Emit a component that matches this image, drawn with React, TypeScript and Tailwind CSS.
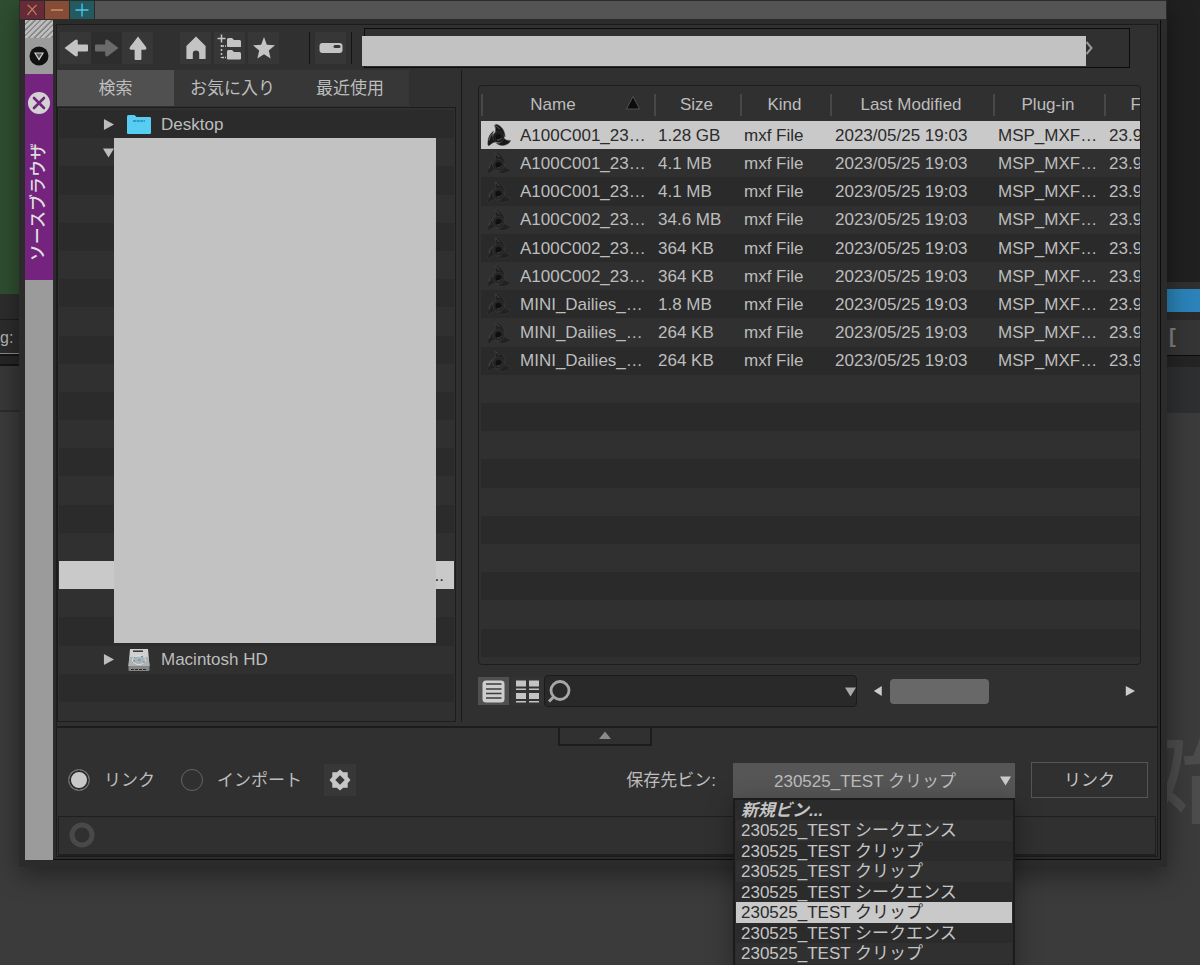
import React from "react";

type Clip = { name: string; size: string };

const clips: Clip[] = [
  { name: "A100C001_23…", size: "1.28 GB" },
  { name: "A100C001_23…", size: "4.1 MB" },
  { name: "A100C001_23…", size: "4.1 MB" },
  { name: "A100C002_23…", size: "34.6 MB" },
  { name: "A100C002_23…", size: "364 KB" },
  { name: "A100C002_23…", size: "364 KB" },
  { name: "MINI_Dailies_…", size: "1.8 MB" },
  { name: "MINI_Dailies_…", size: "264 KB" },
  { name: "MINI_Dailies_…", size: "264 KB" },
];

const bins = [
  "新規ビン...",
  "230525_TEST シークエンス",
  "230525_TEST クリップ",
  "230525_TEST クリップ",
  "230525_TEST シークエンス",
  "230525_TEST クリップ",
  "230525_TEST シークエンス",
  "230525_TEST クリップ",
];

const SELECTED_BIN = 5;
const TREE_ROWS = 21;
const SELECTED_TREE_ROW = 16;
const EMPTY_ROWS = 10;

function ToolButton({
  label,
  disabled,
  children,
}: {
  label: string;
  disabled?: boolean;
  children: React.ReactNode;
}) {
  return (
    <button
      type="button"
      aria-label={label}
      disabled={disabled}
      className="flex h-8 w-[31px] items-center justify-center bg-[#373737] disabled:bg-[#2d2d2d]"
    >
      {children}
    </button>
  );
}

function ArrowIcon({ className }: { className: string }) {
  return (
    <svg width="26" height="26" viewBox="0 0 26 26" className={className}>
      <path
        d="M1.500 13 12 5Q14.800 3.600 14.800 6.500V9.600H24Q25 9.600 25 10.600V15.400Q25 16.400 24 16.400H14.800V19.500Q14.800 22.400 12 21Z"
        fill="currentColor"
      />
    </svg>
  );
}

function HomeIcon() {
  return (
    <svg width="24" height="26" viewBox="0 0 24 26" fill="#c4c4c4">
      <path d="M12 1.500 21.600 11.100V23.400Q21.600 24 21 24H15.200V18.600A3.200 3.200 0 0 0 8.800 18.600V24H3Q2.400 24 2.400 23.400V11.100Z" />
    </svg>
  );
}

function FoldersIcon() {
  return (
    <svg width="26" height="28" viewBox="0 0 26 28">
      <g fill="#c4c4c4">
        <path d="M10 5.500Q10 4 11.500 4H15L17 6H22.500Q24 6 24 7.500V12.500Q24 13 23 13H11Q10 13 10 12Z" />
        <path d="M10 17.500Q10 16 11.500 16H15L17 18H22.500Q24 18 24 19.500V24.500Q24 25.500 23 25.500H11Q10 25.500 10 24.500Z" />
      </g>
      <g stroke="#c4c4c4" strokeWidth="1.500" fill="none">
        <path d="M4.500 0.500V8.500M0.500 4.500H8.500" />
        <path d="M4.500 11V24" strokeDasharray="2 2" />
        <path d="M5 12H9M5 23.500H9" strokeDasharray="2 1" />
      </g>
    </svg>
  );
}

function StarIcon() {
  return (
    <svg width="26" height="26" viewBox="0 0 26 26" fill="#c4c4c4">
      <path d="M13 2 15.800 9.700 24 10.300 17.800 15.600 19.600 23.500 13 19.300 6.400 23.500 8.200 15.600 2 10.300 10.200 9.700Z" />
    </svg>
  );
}

function DriveIcon() {
  return (
    <svg width="24" height="12" viewBox="0 0 24 12">
      <rect x="0.500" y="1" width="23" height="10" rx="3" fill="#c4c4c4" />
      <rect x="14.500" y="3" width="7" height="3" rx="1.500" fill="#373737" />
    </svg>
  );
}

function Triangle({
  dir,
  className = "",
  size = 11,
}: {
  dir: "up" | "down" | "left" | "right";
  className?: string;
  size?: number;
}) {
  const shapes = {
    up: "M6 1.500 12 9H0Z",
    down: "M0 1.500H12L6 11.500Z",
    left: "M1 6 10.500 0V12Z",
    right: "M1 0 12 6 1 12Z",
  };
  return (
    <svg width={size} height={size} viewBox="0 0 12 12" className={className} aria-hidden="true">
      <path d={shapes[dir]} fill="currentColor" />
    </svg>
  );
}

function ClipIcon({ active }: { active: boolean }) {
  return (
    <svg width="24" height="24" viewBox="0 0 24 24" aria-hidden="true">
      <g fill={active ? "#191919" : "#222222"} stroke={active ? "#3a3a3a" : "#3e3e3e"} strokeWidth="0.500">
        <path d="M7.500 2.500Q8.500 1 10 1.500C15 3.500 18 8 18 14C15.500 10 12.500 8.500 8.200 9.700Q9.500 5.500 7.500 2.500Z" />
        <path d="M23.500 17.500Q23 19.500 20.500 21C17 23 13.500 23 9.500 20.500C13.500 20.500 15.500 19 16.500 15Q19.500 18.300 23.500 17.500Z" />
        <path d="M4 21Q2.500 23 1 22.300C0.500 16.500 2 11.500 6.500 8.300C4.800 12.500 5.500 16 9 19Q6 19 4 21Z" />
        <circle cx="11.500" cy="14" r="5.600" />
        <circle cx="11.500" cy="14" r="3.700" fill="#0f0f0f" />
      </g>
      <path
        d="M7.800 2.500Q11 3.500 12.500 6M2 17.500Q3 12.500 5.500 10.500M10 17Q12.500 17.500 14.500 15"
        stroke={active ? "#777777" : "#505050"}
        strokeWidth="0.800"
        fill="none"
      />
    </svg>
  );
}

function FolderIcon() {
  return (
    <svg width="24" height="20" viewBox="0 0 24 20" aria-hidden="true">
      <path d="M0 2.500Q0 1 1.500 1H7.500L9.500 3H23Q24 3 24 4V19Q24 20 23 20H1Q0 20 0 19Z" fill="#57cdf3" />
      <path d="M6 7H18" stroke="#2688b2" strokeWidth="1.500" strokeDasharray="3 0.600" />
    </svg>
  );
}

function DiskIcon() {
  return (
    <svg width="24" height="24" viewBox="0 0 24 24" aria-hidden="true">
      <path d="M3 1H21L22.500 18H1.500Z" fill="#d0d0d0" />
      <path d="M2.300 9H21.700L22.500 18H1.500Z" fill="#aeb2b4" />
      <path d="M1.500 18H22.500V22Q22.500 23 21.500 23H2.500Q1.500 23 1.500 22Z" fill="#858585" />
      <path d="M6 3.200H16" stroke="#333333" strokeWidth="1.500" />
      <ellipse cx="12" cy="12" rx="6.500" ry="4.500" fill="none" stroke="#dddddd" strokeWidth="1" />
      <path d="M7 9.500H8M14 8.500H16M6 13H8M11 12H14M16 14H18" stroke="#3b9cc4" strokeWidth="1.200" />
      <path d="M4 21.500H20" stroke="#2a2a2a" strokeWidth="1" strokeDasharray="3 1" />
    </svg>
  );
}

function TitleBar() {
  return (
    <div className="flex h-5 gap-px pt-px pl-px">
      <button type="button" aria-label="閉じる" className="flex h-[18px] w-6 items-center justify-center bg-[#662b36]">
        <svg width="12" height="12" viewBox="0 0 12 12" stroke="#b87f58" strokeWidth="1.300" fill="none">
          <path d="M1.500 1Q6 4 10.500 11M10.500 1Q6 5 1.500 11" />
        </svg>
      </button>
      <button type="button" aria-label="最小化" className="flex h-[18px] w-6 items-center justify-center bg-[#864c35]">
        <svg width="12" height="12" viewBox="0 0 12 12" stroke="#d79b75" strokeWidth="1.300">
          <path d="M0 6H12" />
        </svg>
      </button>
      <button type="button" aria-label="最大化" className="flex h-[18px] w-6 items-center justify-center bg-[#225a60]">
        <svg width="14" height="14" viewBox="0 0 14 14" stroke="#4fc9ee" strokeWidth="1.300">
          <path d="M0.500 7H13.500M7 0.500V13.500" />
        </svg>
      </button>
      <div className="mr-px h-[18px] flex-1 bg-[#545454]" />
    </div>
  );
}

function Rail() {
  return (
    <div className="flex w-7 shrink-0 flex-col bg-[#9b9b9b]">
      <div className="h-[18px] bg-[repeating-linear-gradient(135deg,#bdbdbd_0px,#bdbdbd_2px,#858585_3px,#858585_4px)]" />
      <div className="flex h-9 items-center justify-center">
        <button type="button" aria-label="メニュー">
          <svg width="20" height="20" viewBox="0 0 20 20">
            <circle cx="10" cy="10" r="9.500" fill="#111111" />
            <path d="M6 7H14L10 13.500Z" fill="#555555" stroke="#d0d0d0" strokeWidth="1.200" />
          </svg>
        </button>
      </div>
      <div className="flex h-[206px] flex-col items-center bg-[#74237e] pt-[17px]">
        <button type="button" aria-label="タブを閉じる">
          <svg width="24" height="24" viewBox="0 0 24 24">
            <circle cx="12" cy="12" r="11" fill="#d2d2d2" />
            <path d="M7 7 17 17M17 7 7 17" stroke="#74237e" strokeWidth="2.600" strokeLinecap="round" />
          </svg>
        </button>
        <span className="mt-7 rotate-180 text-[17px] leading-6 font-medium text-[#dedede] [text-orientation:sideways] [writing-mode:vertical-rl]">
          ソースブラウザ
        </span>
      </div>
    </div>
  );
}

function Toolbar() {
  return (
    <div className="flex h-[45px] items-center pr-[27px] pl-[3px]">
      <div className="flex">
        <ToolButton label="戻る">
          <ArrowIcon className="text-[#c4c4c4]" />
        </ToolButton>
        <ToolButton label="進む" disabled>
          <ArrowIcon className="rotate-180 text-[#6a6a6a]" />
        </ToolButton>
        <ToolButton label="上へ">
          <ArrowIcon className="rotate-90 text-[#c4c4c4]" />
        </ToolButton>
      </div>
      <div className="ml-[27px] flex gap-[3px]">
        <ToolButton label="ホーム">
          <HomeIcon />
        </ToolButton>
        <ToolButton label="フォルダ">
          <FoldersIcon />
        </ToolButton>
        <ToolButton label="お気に入りに追加">
          <StarIcon />
        </ToolButton>
      </div>
      <div className="ml-[30px] flex items-center gap-[5px]">
        <div className="h-8 w-px bg-[#141414]" />
        <ToolButton label="ドライブ">
          <DriveIcon />
        </ToolButton>
        <div className="h-8 w-px bg-[#141414]" />
      </div>
      <div className="relative ml-3 h-10 flex-1 border border-[#0c0c0c] bg-[#303030]">
        <div className="absolute top-[7px] right-[43px] -left-[3px] h-[30px] bg-[#c2c2c2]" />
        <svg className="absolute top-3 right-9" width="7" height="14" viewBox="0 0 7 14" fill="none">
          <path d="M0.500 1 5.500 7 0.500 13" stroke="#9a9a9a" strokeWidth="2" />
        </svg>
      </div>
    </div>
  );
}

function treeRowClass(i: number) {
  if (i === SELECTED_TREE_ROW) return "flex items-center bg-[#c9c9c9] pl-[44px] text-[#2c2c2c]";
  return i % 2 === 0
    ? "flex items-center bg-[#2b2b2b] pl-[44px]"
    : "flex items-center bg-[#303030] pl-[44px]";
}

function TreePane() {
  return (
    <div className="w-[399px] shrink-0">
      <div role="tablist" className="flex h-9 text-[17px] text-[#bdbdbd]">
        <button type="button" role="tab" aria-selected="true" className="w-[117px] bg-[#505050] pt-[2px]">
          検索
        </button>
        <button type="button" role="tab" aria-selected="false" className="w-[117px] bg-[#373737] pt-[2px]">
          お気に入り
        </button>
        <button type="button" role="tab" aria-selected="false" className="w-[118px] bg-[#373737] pt-[2px]">
          最近使用
        </button>
      </div>
      <div className="relative mt-px border border-[#1d1d1d] px-px pt-[2px] pb-[19px]">
        <ul role="tree" className="grid h-[592px] auto-rows-fr text-[17px] text-[#bdbdbd]">
          {Array.from({ length: TREE_ROWS }, (_, i) => (
            <li key={i} role="treeitem" aria-selected={i === SELECTED_TREE_ROW} className={treeRowClass(i)}>
              {i === 0 && (
                <>
                  <Triangle dir="right" className="mr-[13px] text-[#bdbdbd]" />
                  <FolderIcon />
                  <span className="ml-[10px] pt-px">Desktop</span>
                </>
              )}
              {i === 1 && <Triangle dir="down" className="text-[#bdbdbd]" />}
              {i === SELECTED_TREE_ROW && <span className="mr-[10px] ml-auto pt-px">...</span>}
              {i === 19 && (
                <>
                  <Triangle dir="right" className="mr-[13px] text-[#bdbdbd]" />
                  <DiskIcon />
                  <span className="ml-[10px] pt-px">Macintosh HD</span>
                </>
              )}
            </li>
          ))}
        </ul>
        <div className="absolute top-[30px] right-[19px] left-[56px] h-[505px] bg-[#c2c2c2]" />
      </div>
    </div>
  );
}

function fileRowClass(i: number) {
  if (i === 0) return "h-7 bg-[#c9c9c9] text-[#2b2b2b]";
  return i % 2 === 0 ? "h-7 bg-[#2a2a2a]" : "h-7 bg-[#303030]";
}

function HeaderCell({ children }: { children: React.ReactNode }) {
  return (
    <th scope="col" className="p-0 pt-px font-normal">
      <div className="flex h-[22px] items-center justify-center border-l-2 border-[#484848] pr-[3px]">{children}</div>
    </th>
  );
}

function FilePane() {
  return (
    <div className="ml-[5px] flex min-w-0 flex-1 flex-col border-l border-[#191919] pt-[15px] pr-4 pb-[15px] pl-4">
      <div className="h-0 flex-1 overflow-hidden rounded-sm border border-[#1d1d1d] px-[2px] pt-px">
        <table className="h-[570px] w-[706px] table-fixed border-collapse text-[17px] text-[#bdbdbd]">
          <colgroup>
            <col className="w-[173px]" />
            <col className="w-[86px]" />
            <col className="w-[90px]" />
            <col className="w-[163px]" />
            <col className="w-[111px]" />
            <col className="w-[83px]" />
          </colgroup>
          <thead>
            <tr className="h-[34px]">
              <HeaderCell>
                <span className="ml-9">Name</span>
                <svg className="mb-1 ml-[50px]" width="14" height="14" viewBox="0 0 14 14">
                  <path d="M7 0.500 13.500 13H0.500Z" fill="#0c0c0c" stroke="#5d5d5d" strokeWidth="0.800" />
                </svg>
              </HeaderCell>
              <HeaderCell>Size</HeaderCell>
              <HeaderCell>Kind</HeaderCell>
              <HeaderCell>Last Modified</HeaderCell>
              <HeaderCell>Plug-in</HeaderCell>
              <HeaderCell>
                <span className="ml-1">FPS</span>
              </HeaderCell>
            </tr>
          </thead>
          <tbody>
            {clips.map((c, i) => (
              <tr key={i} className={fileRowClass(i)}>
                <td className="p-0">
                  <div className="flex h-7 items-center gap-[9px] pl-[6px] whitespace-nowrap">
                    <ClipIcon active={i === 0} />
                    <span className="pt-px">{c.name}</span>
                  </div>
                </td>
                <td className="p-0 pt-px pl-1 whitespace-nowrap">{c.size}</td>
                <td className="p-0 pt-px pl-1 whitespace-nowrap">mxf File</td>
                <td className="p-0 pt-px pl-[5px] whitespace-nowrap">2023/05/25 19:03</td>
                <td className="p-0 pt-px pl-[5px] whitespace-nowrap">MSP_MXF…</td>
                <td className="p-0 pt-px pl-[5px] whitespace-nowrap">23.976</td>
              </tr>
            ))}
            {Array.from({ length: EMPTY_ROWS }, (_, i) => (
              <tr key={i} className={fileRowClass(clips.length + i)}>
                <td colSpan={6} className="p-0" />
              </tr>
            ))}
          </tbody>
        </table>
      </div>
      <div className="mt-[10px] flex h-8 items-center">
        <button type="button" aria-label="リスト表示" className="flex h-7 w-[31px] shrink-0 items-center justify-center bg-[#505050]">
          <svg width="23" height="23" viewBox="0 0 23 23">
            <rect x="0.500" y="0.500" width="22" height="22" rx="3.500" fill="#cdcdcd" />
            <path d="M4 4H19.500M4 9H19.500M4 13.500H19.500M4 18H19.500" stroke="#3a3a3a" strokeWidth="1.300" />
          </svg>
        </button>
        <button type="button" aria-label="サムネイル表示" className="ml-[2px] flex h-7 w-8 shrink-0 items-center justify-center bg-[#333333]">
          <svg width="23" height="23" viewBox="0 0 23 23" fill="#c4c4c4">
            <path d="M0 0.500H10V6.500H0ZM13 0.500H23V6.500H13ZM0 8.500H10V10H0ZM13 8.500H23V10H13ZM0 13H10V19H0ZM13 13H23V19H13ZM0 21H10V22.500H0ZM13 21H23V22.500H13Z" />
          </svg>
        </button>
        <label className="ml-px flex h-8 w-[313px] items-center rounded-sm border border-[#1b1b1b] bg-[#292929] pl-[2px]">
          <svg width="24" height="24" viewBox="0 0 24 24" fill="none" stroke="#a8a8a8" aria-hidden="true">
            <circle cx="13" cy="11.500" r="9" strokeWidth="2.800" />
            <path d="M6.500 18 2 22.500" strokeWidth="3" />
          </svg>
          <input type="text" aria-label="ファイルを検索" className="w-0 flex-1 bg-transparent text-[17px] text-[#bdbdbd] outline-none" />
          <Triangle dir="down" className="text-[#a8a8a8]" />
        </label>
        <div className="ml-4 flex flex-1 items-center pr-[6px] text-[#cccccc]">
          <Triangle dir="left" size={10} />
          <div className="ml-[7px] h-[25px] w-[99px] rounded-sm bg-[#686868]" />
          <Triangle dir="right" size={10} className="ml-auto" />
        </div>
      </div>
    </div>
  );
}

function LinkOptions() {
  return (
    <div className="relative flex h-[90px] items-center border-t-2 border-[#1c1c1c] pt-[18px] pr-[9px] pb-[2px] pl-[11px] text-[17px] text-[#bdbdbd]">
      <button
        type="button"
        aria-label="パネルを折りたたむ"
        className="absolute -top-px left-[501px] flex h-[19px] w-[94px] items-center justify-center border-2 border-t-0 border-[#1c1c1c]"
      >
        <Triangle dir="up" size={12} className="text-[#8a8a8a]" />
      </button>
      <label className="flex items-center">
        <input
          type="radio"
          name="mode"
          defaultChecked
          className="mr-[14px] h-[22px] w-[22px] appearance-none rounded-full border border-[#666666] checked:bg-[#c8c8c8] checked:shadow-[inset_0_0_0_2px_#2a2a2a]"
        />
        <span className="pt-[2px]">リンク</span>
      </label>
      <label className="ml-[26px] flex items-center">
        <input
          type="radio"
          name="mode"
          className="mr-[14px] h-[22px] w-[22px] appearance-none rounded-full border border-[#666666] checked:bg-[#c8c8c8]"
        />
        <span className="pt-[2px]">インポート</span>
      </label>
      <button type="button" aria-label="設定" className="ml-[22px] flex h-8 w-8 items-center justify-center bg-[#373737]">
        <svg width="22" height="22" viewBox="0 0 22 22">
          <path
            fillRule="evenodd"
            fill="#c6c6c6"
            d="M11 0.500 14.200 3.300H18.700V7.800L21.500 11 18.700 14.200V18.700H14.200L11 21.500 7.800 18.700H3.300V14.200L0.500 11 3.300 7.800V3.300H7.800ZM11 6.300 6.300 11 11 15.700 15.700 11Z"
          />
        </svg>
      </button>
      <label htmlFor="target-bin" className="ml-auto pt-[2px]">
        保存先ビン:
      </label>
      <div className="relative ml-[17px] h-[35px] w-[282px]">
        <select
          id="target-bin"
          defaultValue={SELECTED_BIN}
          className="h-full w-full appearance-none bg-[#565656] pt-[3px] pr-[18px] text-[#bdbdbd] [text-align-last:center]"
        >
          {bins.map((b, i) => (
            <option key={i} value={i}>
              {b}
            </option>
          ))}
        </select>
        <Triangle dir="down" className="pointer-events-none absolute top-3 right-1 text-[#cccccc]" />
        <ul
          role="listbox"
          aria-label="保存先ビン"
          className="absolute top-full left-0 z-10 grid h-[174px] w-full grid-rows-8 border-x-2 border-t-2 border-[#1c1c1c] bg-[#2b2b2b] px-px pb-2 text-[#c4c4c4] shadow-[0_6px_24px_rgba(0,0,0,0.35)]"
        >
          {bins.map((b, i) => (
            <li
              key={i}
              role="option"
              aria-selected={i === SELECTED_BIN}
              className={
                i === SELECTED_BIN
                  ? "bg-[#c9c9c9] pl-[5px] leading-[22px] text-[#2b2b2b]"
                  : i === 0
                    ? "pl-[5px] leading-[22px] font-bold italic"
                    : i % 2
                      ? "bg-[#303030] pl-[5px] leading-[22px]"
                      : "bg-[#2b2b2b] pl-[5px] leading-[22px]"
              }
            >
              <span className="block h-5">{b}</span>
            </li>
          ))}
        </ul>
      </div>
      <button type="button" className="ml-4 h-9 w-[117px] border border-[#555555] pt-px text-[#c4c4c4]">
        リンク
      </button>
    </div>
  );
}

function BackdropLeft() {
  return (
    <div className="w-[19px] shrink-0 overflow-hidden bg-[#3b3b3b]">
      <div className="h-[294px] bg-[#2f4f31]" />
      <div className="h-[26px] border-b border-[#1c1c1c] bg-[#2d2d2d]" />
      <div className="h-[34px] border-b border-[#8a8a8a] bg-[#2c2c2c] text-[16px] leading-9 whitespace-nowrap text-[#b5b5b5]">
        g: 1
      </div>
      <div className="h-3 border-y-2 border-[#151515] bg-[#262626]" />
      <div className="h-[46px] border-b-2 border-[#2c2c2c] bg-[#383838]" />
    </div>
  );
}

function BackdropRight() {
  return (
    <div className="relative w-[33px] shrink-0 overflow-hidden bg-[#3b3b3b]">
      <div className="h-[282px] bg-[#202020]" />
      <div className="h-[7px] bg-[#303030]" />
      <div className="h-[23px] bg-[#2b83b9]" />
      <div className="h-2 bg-[#2a2a2a]" />
      <div className="h-9 border-b border-[#0c0c0c] bg-[#353535] pl-[2px] text-[20px] leading-8 font-bold text-[#808080]">
        [
      </div>
      <div className="h-[11px] bg-[#242424]" />
      <div className="h-[46px] bg-[#2e2f30]" />
      <div className="absolute top-[704px] -left-[32px] text-[116px] leading-[140px] text-[#4c4c4c]">始</div>
    </div>
  );
}

export default function App() {
  return (
    <div className="flex min-h-screen overflow-hidden bg-[#3b3b3b] font-['Liberation_Sans','Noto_Sans_CJK_JP',sans-serif]">
      <BackdropLeft />
      <main className="z-10 flex min-w-0 flex-1 flex-col self-start bg-[#2b2b2b] pb-[7px] shadow-[0_8px_24px_rgba(0,0,0,0.4)]">
        <TitleBar />
        <div className="flex pl-[6px]">
          <Rail />
          <div className="mr-[6px] min-w-0 flex-1 border-r border-b border-[#0c0c0c] pt-1 pr-[2px] pb-[2px] pl-[3px]">
            <div className="border border-[#1c1c1c] bg-[#303030]">
              <Toolbar />
              <div className="flex pb-1">
                <TreePane />
                <FilePane />
              </div>
              <LinkOptions />
              <div className="mx-px flex h-10 items-center border border-b-2 border-[#1f1f1f] pb-[2px] pl-[10px]">
                <svg width="26" height="26" viewBox="0 0 26 26" fill="none" aria-hidden="true">
                  <circle cx="13" cy="13" r="10" stroke="#494949" strokeWidth="5" />
                </svg>
              </div>
            </div>
          </div>
        </div>
      </main>
      <BackdropRight />
    </div>
  );
}
